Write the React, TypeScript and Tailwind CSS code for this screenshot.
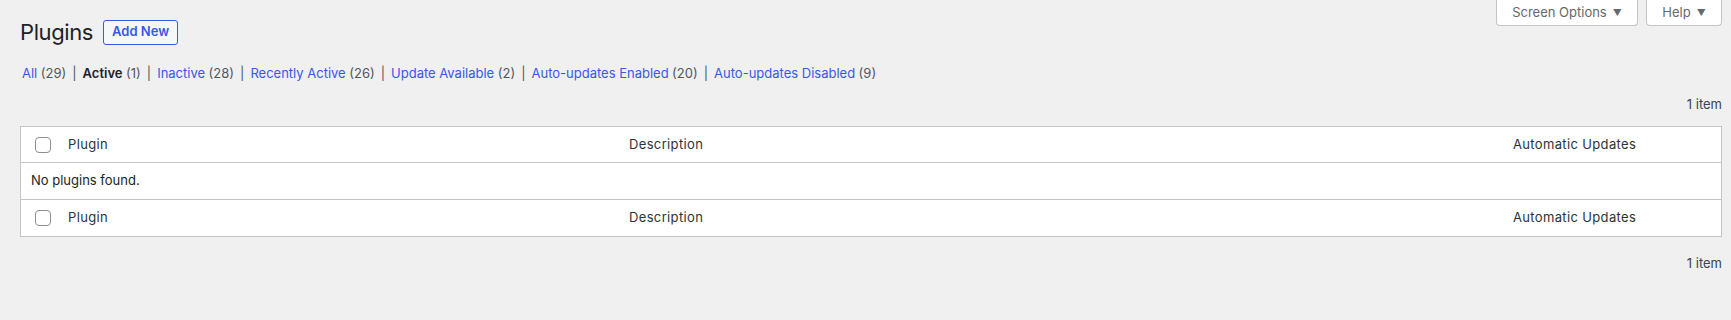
import React from "react";

const filters = [
  { label: "All", count: 29 },
  { label: "Active", count: 1, current: true },
  { label: "Inactive", count: 28 },
  { label: "Recently Active", count: 26 },
  { label: "Update Available", count: 2 },
  { label: "Auto-updates Enabled", count: 20 },
  { label: "Auto-updates Disabled", count: 9 },
];

function Checkbox() {
  return <span className="block h-4 w-4 rounded-[4px] border border-[#8c8f94] bg-white" />;
}

function HeadRow({ bottom }: { bottom?: boolean }) {
  return (
    <div
      className={`flex items-center tracking-[0.35px] text-[#2c3338] ${bottom ? "h-[37px] border-t border-[#c3c4c7]" : "h-[36px] border-b border-[#c3c4c7]"}`}
    >
      <div className="w-[39px] shrink-0 pl-[14px]">
        <Checkbox />
      </div>
      <div className="w-[561px] shrink-0 pl-[8px]">Plugin</div>
      <div className="w-[884px] shrink-0 pl-[8px]">Description</div>
      <div className="flex-1 pl-[8px]">Automatic Updates</div>
    </div>
  );
}

export default function App() {
  return (
    <div
      className="relative min-h-[320px] bg-[#f0f0f1] text-[13px] text-[#3c434a]"
      style={{ fontFamily: "Inter, 'Noto Sans', sans-serif" }}
    >
      <div className="absolute right-[9px] top-0 flex gap-[8px]">
        <button className="flex h-[26px] w-[142px] items-center justify-center gap-[6px] rounded-b-[4px] border border-t-0 border-[#c3c4c7] bg-white text-[#646970]">
          Screen Options <span className="text-[9px]">▼</span>
        </button>
        <button className="flex h-[26px] w-[76px] items-center justify-center gap-[6px] rounded-b-[4px] border border-t-0 border-[#c3c4c7] bg-white text-[#646970]">
          Help <span className="text-[9px]">▼</span>
        </button>
      </div>

      <div className="pl-[20px] pr-[9px]">
        <div className="flex items-center pt-[19px]">
          <h1 className="pt-[1px] text-[22px] leading-[25px] tracking-[-0.4px] text-[#1d2327]">Plugins</h1>
          <span className="ml-[10px] flex h-[25px] items-center rounded-[3px] border border-[#3858e9] bg-[#f6f7f7] px-[8px] font-semibold text-[#3858e9]">
            Add New
          </span>
        </div>

        <div className="mt-[18px] flex items-center pl-[2px] leading-[20px] text-[#50575e]">
          {filters.map((f, i) => (
            <span key={f.label} className="flex items-center">
              {i > 0 && <span className="mx-[6px] text-[#50575e]">|</span>}
              <span className={f.current ? "font-semibold text-[#1d2327]" : "text-[#3858e9]"}>
                {f.label}
              </span>
              <span className="ml-[3.5px]">({f.count})</span>
            </span>
          ))}
        </div>

        <div className="mt-[11px] flex justify-end leading-[20px] text-[#3c434a]">1 item</div>

        <div className="mt-[12px] border border-[#c3c4c7] bg-white">
          <HeadRow />
          <div className="flex h-[36px] items-center pl-[10px] text-[#1d2327]">No plugins found.</div>
          <HeadRow bottom />
        </div>

        <div className="mt-[16px] flex justify-end leading-[20px] text-[#3c434a]">1 item</div>
      </div>
    </div>
  );
}
